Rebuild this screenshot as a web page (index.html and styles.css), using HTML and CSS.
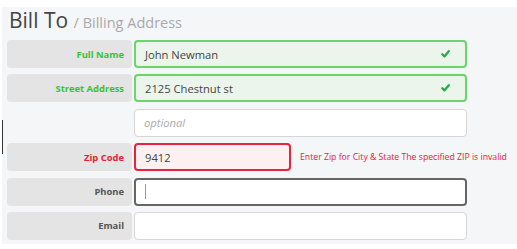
FILE: index.html
```html
<!DOCTYPE html>
<html>
<head>
<meta charset="utf-8">
<link rel="stylesheet" href="styles.css">
</head>
<body>
<div class="edge-mark"></div>
<section class="panel">
  <h1 class="title">Bill To <span class="sub">/ Billing Address</span></h1>
  <div class="rows">
    <div class="row">
      <div class="label ok">Full Name</div>
      <div class="field valid"><span class="val">John Newman</span>
        <svg class="check" width="9" height="8" viewBox="0 0 9 8"><path d="M1.3 4.3 L3.4 6.4 L7.8 1.3" fill="none" stroke="#2aa84a" stroke-width="2.3" stroke-linecap="round" stroke-linejoin="round"/></svg>
      </div>
    </div>
    <div class="row">
      <div class="label ok">Street Address</div>
      <div class="field valid"><span class="val">2125 Chestnut st</span>
        <svg class="check" width="9" height="8" viewBox="0 0 9 8"><path d="M1.3 4.3 L3.4 6.4 L7.8 1.3" fill="none" stroke="#2aa84a" stroke-width="2.3" stroke-linecap="round" stroke-linejoin="round"/></svg>
      </div>
    </div>
    <div class="row">
      <div class="label blank"></div>
      <div class="field"><span class="placeholder">optional</span></div>
    </div>
    <div class="row">
      <div class="label bad">Zip Code</div>
      <div class="zipwrap">
        <div class="field invalid zip"><span class="val">9412</span></div>
        <span class="error">Enter Zip for City &amp; State The specified ZIP is invalid</span>
      </div>
    </div>
    <div class="row">
      <div class="label">Phone</div>
      <div class="field focus"><span class="cursor"></span></div>
    </div>
    <div class="row">
      <div class="label">Email</div>
      <div class="field"></div>
    </div>
  </div>
</section>
</body>
</html>
```

FILE: styles.css
```css
html, body {
  margin: 0;
  padding: 0;
  background: #ffffff;
  font-family: "Open Sans", "Liberation Sans", sans-serif;
}

.edge-mark {
  position: absolute;
  left: 2px;
  top: 120px;
  width: 1px;
  height: 34px;
  background: #333;
}

.panel {
  margin: 7px 0 0 2px;
  background: #f5f6f8;
  padding: 0 0 4px 5px;
}

.title {
  margin: 0 0 7px 2px;
  padding-top: 1px;
  font-weight: 400;
  font-size: 21px;
  line-height: 25px;
  height: 25px;
  color: #444;
}

.sub {
  font-size: 14.5px;
  line-height: 14px;
  color: #a9a9a9;
}

.rows {
  display: flex;
  flex-direction: column;
  gap: 6.4px;
}

.row {
  display: flex;
  align-items: center;
  height: 28px;
}

.label {
  width: 125px;
  height: 28px;
  box-sizing: border-box;
  margin-right: 2px;
  background: #e4e4e4;
  border-radius: 4px;
  display: flex;
  align-items: center;
  justify-content: flex-end;
  padding-right: 8px;
  font-size: 9.4px;
  font-weight: 700;
  color: #555;
}

.label.ok { color: #33c433; }
.label.bad { color: #ea1b33; }
.label.blank { background: transparent; }

.field {
  width: 333px;
  height: 28px;
  box-sizing: border-box;
  border: 1px solid #d6d6d6;
  border-radius: 4px;
  background: #ffffff;
  display: flex;
  align-items: center;
  padding: 0 9px;
  font-size: 11.2px;
  color: #444;
}

.field.valid {
  border: 2px solid #6bd46b;
  background: #ebf5ec;
  justify-content: space-between;
}

.field.invalid {
  border: 2px solid #e8233b;
  background: #fdf0f1;
}

.field.focus {
  border: 2px solid #666;
}

.zipwrap {
  display: flex;
  align-items: center;
}

.field.zip {
  width: 157px;
}

.error {
  margin-left: 9px;
  font-size: 8.7px;
  color: #ea1b33;
  white-space: nowrap;
}

.placeholder {
  font-style: italic;
  color: #ababab;
}

.check {
  margin-right: 6px;
}

.cursor {
  display: inline-block;
  width: 1px;
  height: 15px;
  background: #999;
}
```
